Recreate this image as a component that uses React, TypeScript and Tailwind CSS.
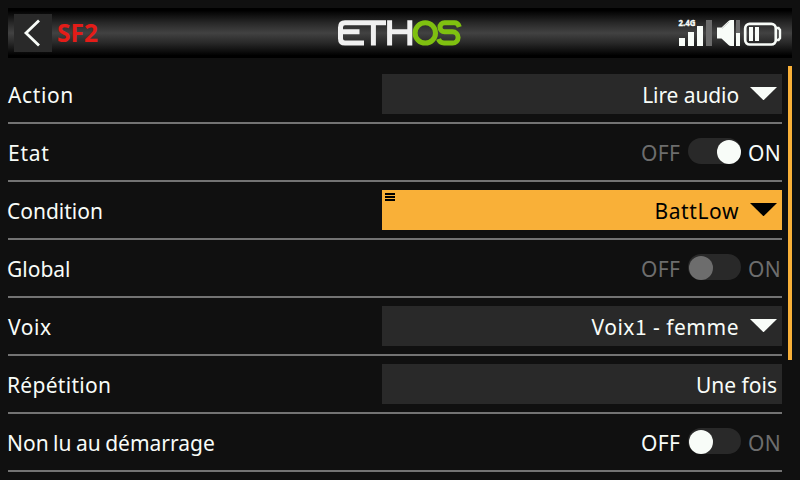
import type { ReactNode } from "react";

function Caret({ color }: { color: string }) {
  return (
    <svg className="mt-3 ml-3 h-[14px] w-[27px] shrink-0" viewBox="0 0 27 14">
      <path d="M0 1H27L13.5 14.3Z" fill={color} />
    </svg>
  );
}

function Row({ label, tracking, children }: { label: string; tracking: string; children: ReactNode }) {
  return (
    <div className="flex h-[58px] items-start justify-between border-b-2 border-[#737373] pt-2">
      <span className={`-ml-px pt-[5px] leading-[32px] whitespace-nowrap ${tracking}`}>{label}</span>
      {children}
    </div>
  );
}

function Field({ value, tracking, caret = false, active = false }: { value: ReactNode; tracking: string; caret?: boolean; active?: boolean }) {
  return (
    <div className={`flex h-10 w-[400px] items-start justify-end ${caret ? "pr-[5px]" : "pr-[5px]"} ${active ? "bg-[#f9b038] text-black" : "bg-[#292929]"}`}>
      {active && (
        <span className="mt-[3px] mr-auto ml-[3px] flex w-[10px] flex-col gap-px">
          <i className="h-[2px] bg-black" />
          <i className="h-[2px] bg-black" />
          <i className="h-[2px] bg-black" />
        </span>
      )}
      <span className={`pt-[5px] leading-[32px] whitespace-pre ${tracking}`}>{value}</span>
      {caret && <Caret color={active ? "#000" : "#f8fcf8"} />}
    </div>
  );
}

function Toggle({ on, disabled = false }: { on: boolean; disabled?: boolean }) {
  const lit = "text-[#f8fcf8]";
  const dim = "text-[#6d6d6d]";
  return (
    <div className="flex items-start">
      <span className={`w-[47px] pt-[5px] leading-[32px] tracking-[0.3px] ${!on && !disabled ? lit : dim}`}>OFF</span>
      <span className={`mt-[6px] flex h-[26px] w-[53px] items-center rounded-full bg-[#292929] ${on ? "justify-end" : "justify-start pl-[0.5px]"}`}>
        <i className={`mt-px size-6 rounded-full ${disabled ? "bg-[#6d6d6d]" : "bg-[#f8fcf8]"}`} />
      </span>
      <span className={`w-[41px] pt-[5px] pl-[7px] leading-[32px] tracking-[0.3px] ${on && !disabled ? lit : dim}`}>ON</span>
    </div>
  );
}

function Logo() {
  return (
    <svg className="h-[26px] w-[124px]" viewBox="338 20.5 124 26" fill="none" strokeWidth="5">
      <path d="M364 43.6H345Q340.5 43.6 340.5 39V28Q340.5 23.2 345 23.2H386M340.5 32.3H359.5M373.4 23V46M389.6 20.8V46M409.8 20.8V46M389.4 32.3H409.8" stroke="#f0f0f0" />
      <circle cx="425.3" cy="33.4" r="10.2" stroke="#7fc010" />
      <path d="M459.3 27.5Q458 23.3 454.5 23.3H444.5A4.5 4.5 0 0 0 444.5 32.3H452.5A5.6 5.6 0 0 1 452.5 43.5H444Q439.8 43.5 438.5 39.5" stroke="#7fc010" />
    </svg>
  );
}

function Status() {
  return (
    <svg className="h-[38px] w-[108px]" viewBox="676 14 108 38">
      <text x="678.5" y="26" fill="#f8fcf8" stroke="#f8fcf8" strokeWidth="0.35" fontSize="8" fontWeight="700" textLength="17" lengthAdjust="spacingAndGlyphs">2.4G</text>
      <path d="M679 38h6v8h-6zM688 32h6v14h-6zM697 26h6v20h-6z" fill="#f8fcf8" />
      <path d="M706 20h6v26h-6z" fill="#6b6b6b" />
      <path d="M717 27.5h4.5l7-6.5q1-1 2.500-1h3v26h-3q-1.500 0-2.500-1l-7-6.500h-4.500z" fill="#f8fcf8" />
      <path d="M722 28.500l7-6.500" stroke="#b4b8b4" strokeWidth="0.7" />
      <path d="M736 20h4v13h-4z" fill="#6b6b6b" />
      <path d="M736 33h4v13h-4z" fill="#f8fcf8" />
      <rect x="745.2" y="23.9" width="30.6" height="20.6" rx="4.5" fill="none" stroke="#f8fcf8" strokeWidth="2.7" />
      <path d="M776 28h2.500l1.500 2v8l-1.500 2h-2.500" fill="none" stroke="#f8fcf8" strokeWidth="2.400" />
      <path d="M749 27h4v14h-4zM755 27h4v14h-4z" fill="#f8fcf8" />
    </svg>
  );
}

export default function App() {
  return (
    <div className="h-[480px] w-[800px] overflow-hidden bg-[#101010] px-2 pt-2 font-['Noto_Sans','Noto_Sans_CJK_SC',sans-serif] text-[21px] text-[#f8fcf8]">
      <header className="grid h-[50px] grid-cols-[1fr_124px_1fr] items-center bg-[linear-gradient(#000_0%,#000_5%,#282828_30%,#424242_50%,#282828_70%,#000_95%,#000_100%)]">
        <div className="flex items-center">
          <span className="ml-[6px] flex size-[38px] items-center justify-center bg-[#292929]">
            <svg className="size-[38px]" viewBox="0 0 38 38" fill="none" stroke="#f8fcf8" strokeWidth="2.8">
              <path d="M25 6.5L12 19L25 31.5" />
            </svg>
          </span>
          <span className="ml-[5px] text-[24.5px] leading-[32px] font-bold text-[#e41c18]">SF2</span>
        </div>
        <Logo />
        <div className="flex justify-end pr-2">
          <Status />
        </div>
      </header>
      <div className="flex justify-between pt-2">
        <main className="w-[774px]">
          <Row label="Action" tracking="pl-px tracking-[0.6px]">
            <Field value="Lire audio" tracking="-mr-px tracking-[-0.1px]" caret />
          </Row>
          <Row label="Etat" tracking="pl-px tracking-[0.7px]">
            <Toggle on />
          </Row>
          <Row label="Condition" tracking="tracking-[0px]">
            <Field value="BattLow" tracking="-mr-px tracking-[0.6px]" caret active />
          </Row>
          <Row label="Global" tracking="tracking-[0px]">
            <Toggle on={false} disabled />
          </Row>
          <Row label="Voix" tracking="pl-px tracking-[0.6px]">
            <Field
              value={<>Voix<span className="font-['Noto_Sans_CJK_SC',sans-serif] leading-none">1</span> - femme</>}
              tracking="-mr-px tracking-[0.5px]"
              caret
            />
          </Row>
          <Row label="Répétition" tracking="tracking-[0.3px]">
            <Field value="Une fois" tracking="tracking-[0px]" />
          </Row>
          <Row label="Non lu au démarrage" tracking="tracking-[0px] [word-spacing:-1px]">
            <Toggle on={false} />
          </Row>
        </main>
        <div className="h-[294px] w-1 bg-[#f9b038]" />
      </div>
    </div>
  );
}
